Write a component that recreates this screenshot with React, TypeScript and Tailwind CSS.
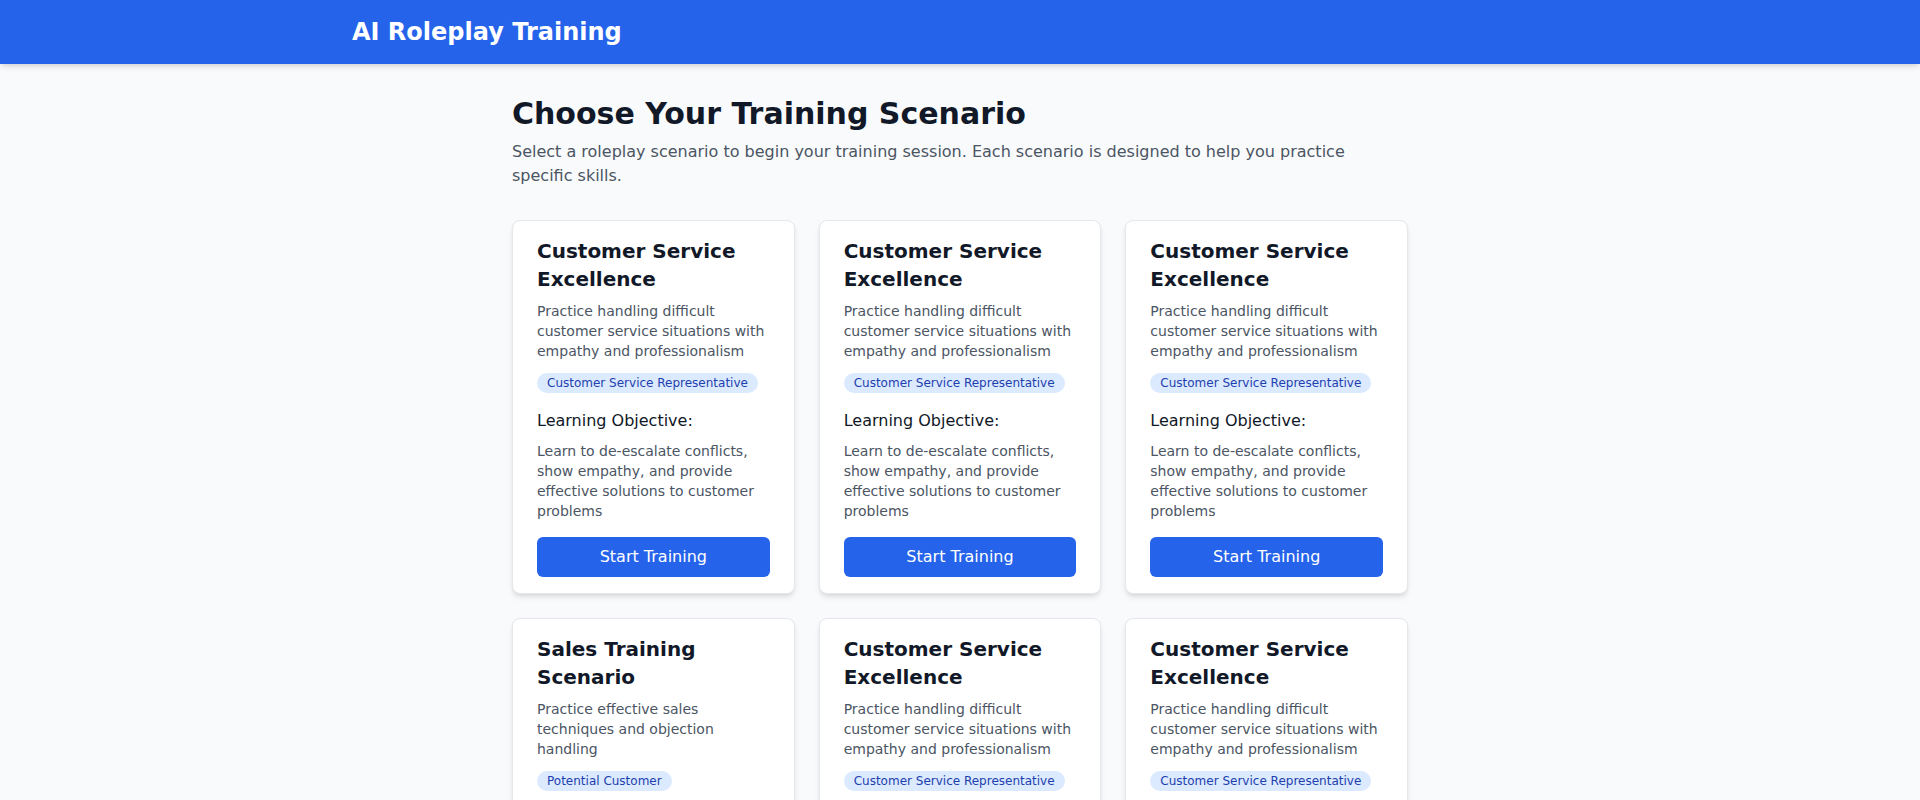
type Scenario = {
  id: number;
  title: string;
  description: string;
  role: string;
  objective: string;
};

const customerService = {
  title: "Customer Service Excellence",
  description:
    "Practice handling difficult customer service situations with empathy and professionalism",
  role: "Customer Service Representative",
  objective:
    "Learn to de-escalate conflicts, show empathy, and provide effective solutions to customer problems",
};

const scenarios: Scenario[] = [
  { id: 1, ...customerService },
  { id: 2, ...customerService },
  { id: 3, ...customerService },
  {
    id: 4,
    title: "Sales Training Scenario",
    description: "Practice effective sales techniques and objection handling",
    role: "Potential Customer",
    objective:
      "Learn to identify customer needs, handle objections, and close deals with confidence",
  },
  { id: 5, ...customerService },
  { id: 6, ...customerService },
];

const ScenarioCard = ({ scenario }: { scenario: Scenario }) => {
  return (
    <div className="bg-white rounded-lg border border-[#e5e7eb] shadow-md px-6 py-4 flex flex-col">
      <h2 className="text-xl font-bold text-[#111827] mb-2">{scenario.title}</h2>
      <p className="text-sm leading-5 text-[#4b5563] mb-3">{scenario.description}</p>
      <span className="self-start bg-[#dbeafe] text-[#1e40af] text-xs leading-4 px-2.5 py-0.5 rounded-full">
        {scenario.role}
      </span>
      <div className="mt-4">
        <h3 className="text-base text-[#111827] mb-2">Learning Objective:</h3>
        <p className="text-sm leading-5 text-[#4b5563]">{scenario.objective}</p>
      </div>
      <button className="mt-4 w-full bg-[#2563eb] hover:bg-[#1d4ed8] text-white text-base py-2 rounded-md">
        Start Training
      </button>
    </div>
  );
};

export default function App() {
  return (
    <div className="min-h-screen bg-[#f9fafb] font-['DejaVu_Sans',sans-serif]">
      {/* header */}
      <header className="bg-[#2563eb] shadow-md">
        <div className="max-w-7xl mx-auto px-8 py-4">
          <h1 className="text-2xl font-bold text-white">AI Roleplay Training</h1>
        </div>
      </header>

      {/* scenarios */}
      <main className="max-w-4xl mx-auto py-8">
        <h1 className="text-3xl font-bold text-[#111827] mb-2">
          Choose Your Training Scenario
        </h1>
        <p className="text-base text-[#4b5563] mb-8">
          Select a roleplay scenario to begin your training session. Each scenario is
          designed to help you practice specific skills.
        </p>
        <div className="grid grid-cols-3 gap-6">
          {scenarios.map((s) => (
            <ScenarioCard key={s.id} scenario={s} />
          ))}
        </div>
      </main>
    </div>
  );
}
